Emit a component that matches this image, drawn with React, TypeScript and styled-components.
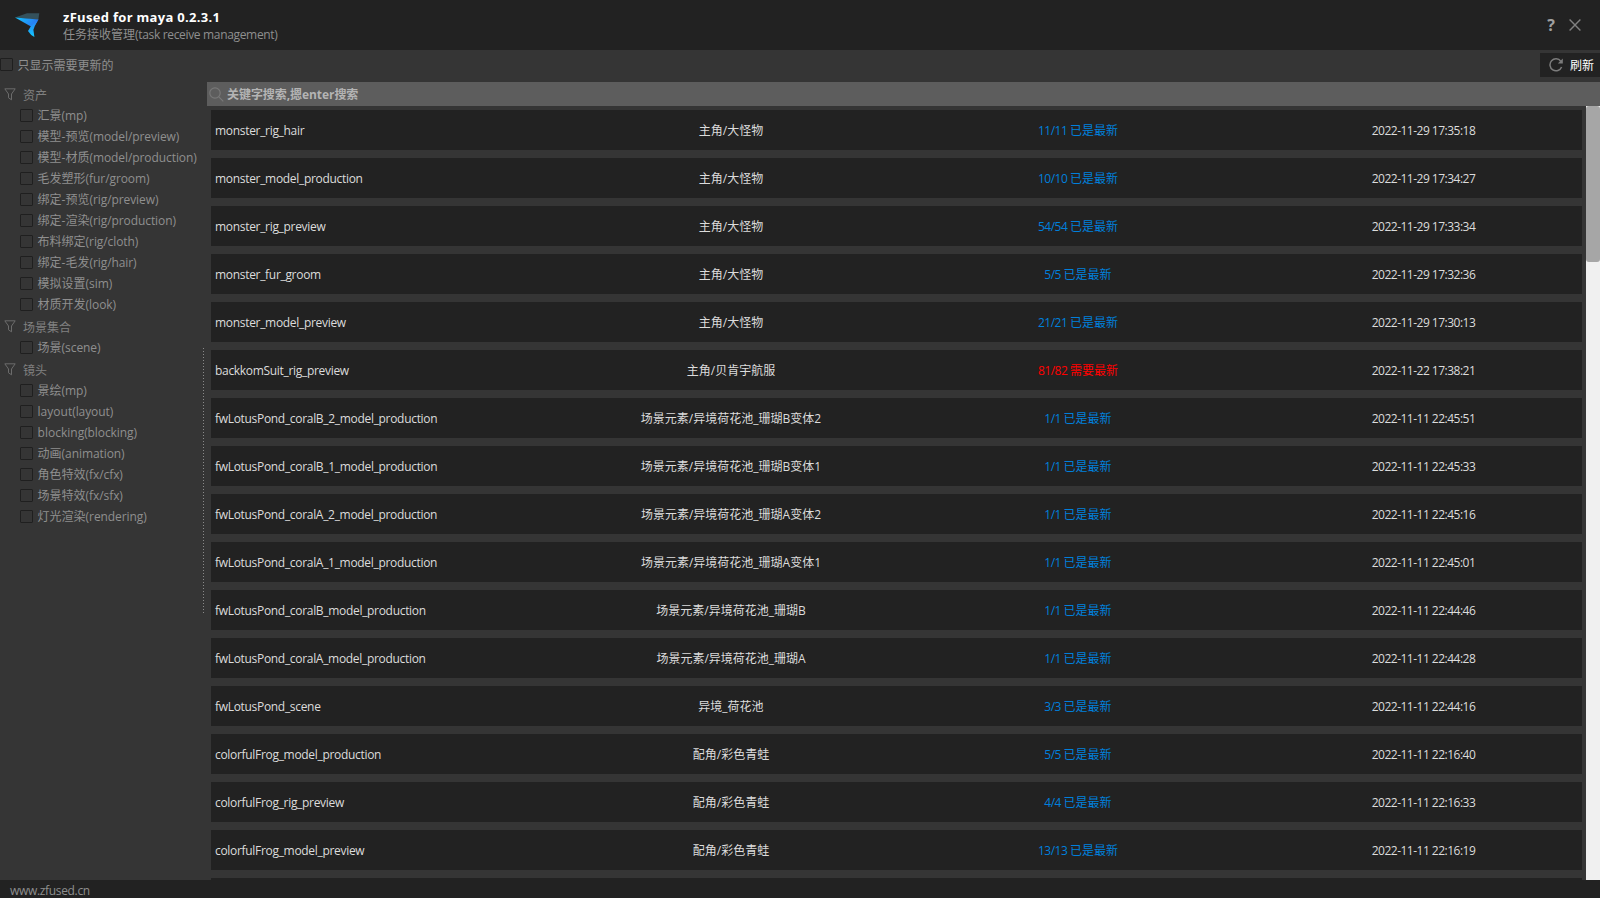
import React from 'react';
import styled, { createGlobalStyle } from 'styled-components';

const Global = createGlobalStyle`
  * { box-sizing: border-box; }
  body { margin: 0; background: #353535; overflow: hidden; }
`;

const Window = styled.div`
  width: 1600px;
  height: 898px;
  display: flex;
  flex-direction: column;
  overflow: hidden;
  background: #353535;
  color: #8f8f8f;
  font: 12px/18px 'Open Sans', 'Noto Sans CJK SC', sans-serif;
  white-space: nowrap;
`;

const Header = styled.header`
  height: 50px;
  flex: none;
  display: flex;
  align-items: center;
  background: #222222;
  padding: 0 13px 0 15px;
`;

const LogoIcon = styled.svg`
  width: 25px;
  height: 26px;
  flex: none;
`;

const Titles = styled.div`
  flex: 1;
  margin-left: 23px;
  padding-top: 1px;
`;

const Title = styled.h1`
  margin: 0;
  font-size: 13px;
  line-height: 17px;
  font-weight: 700;
  letter-spacing: 0.31px;
  color: #ffffff;
`;

const Subtitle = styled.div`
  font-size: 12px;
  line-height: 17px;
`;

const WindowButton = styled.button`
  width: 24px;
  height: 24px;
  padding: 0;
  border: 0;
  background: none;
  display: flex;
  align-items: center;
  justify-content: center;
  color: #a0a0a0;
  font: 700 16px/24px 'Open Sans', sans-serif;
`;

const Toolbar = styled.div`
  height: 32px;
  flex: none;
  display: flex;
  align-items: flex-start;
  justify-content: space-between;
  padding-top: 3px;
`;

const CheckLabel = styled.label<{ $indent?: number }>`
  height: 21px;
  display: flex;
  align-items: center;
  gap: 4.6px;
  padding-left: ${(p) => p.$indent ?? 0}px;
`;

const ToolbarLabel = styled(CheckLabel)`
  height: 23px;
`;

const Box = styled.span`
  width: 13px;
  height: 13px;
  flex: none;
  border: 1px solid #1f1f1f;
  border-radius: 1px;
`;

const Tracked = styled.span<{ $spacing: number }>`
  letter-spacing: ${(p) => p.$spacing}px;
`;

const LabelText = styled.span<{ $drop?: number }>`
  padding-top: ${(p) => p.$drop ?? 1}px;
`;

const RefreshButton = styled.button`
  width: 60px;
  height: 24px;
  padding: 0 0 0 9px;
  border: 0;
  background: #222222;
  color: #ffffff;
  display: flex;
  align-items: center;
  gap: 7px;
  font: 12px/18px 'Open Sans', 'Noto Sans CJK SC', sans-serif;
`;

const RefreshText = styled.span`
  padding-top: 2px;
`;

const Body = styled.main`
  flex: 1;
  min-height: 0;
  display: flex;
`;

const Sidebar = styled.aside`
  width: 203px;
  flex: none;
  padding-top: 1px;
`;

const GroupTitle = styled.div`
  height: 22px;
  display: flex;
  align-items: center;
  gap: 7px;
  padding-left: 4px;
  color: #808080;
`;

const GroupName = styled.span`
  padding-top: 3px;
`;

const Splitter = styled.div`
  width: 4px;
  flex: none;
  display: flex;
  align-items: center;
  padding-bottom: 2px;
`;

const Dots = styled.div`
  width: 1px;
  height: 265px;
  background: repeating-linear-gradient(#8a8a8a 0 1px, transparent 1px 3px);
`;

const Content = styled.section`
  flex: 1;
  display: flex;
  flex-direction: column;
`;

const Search = styled.div`
  height: 24px;
  flex: none;
  display: flex;
  align-items: center;
  gap: 3px;
  padding-left: 2px;
  background: #5d5d5d;
  color: #b4b4b4;
  font-weight: 700;
`;

const SearchHint = styled.span`
  padding-top: 2px;
  letter-spacing: -0.06px;
`;

const ListArea = styled.div`
  flex: 1;
  min-height: 0;
  display: flex;
`;

const List = styled.div`
  flex: 1;
  display: flex;
  flex-direction: column;
  gap: 8px;
  padding: 4px 4px 0;
  overflow: hidden;
`;

const Row = styled.div`
  height: 40px;
  flex: none;
  display: grid;
  grid-template-columns: 347px 346px 348px 330px;
  align-items: center;
  padding-top: 2px;
  background: #222222;
  color: #dcdcdc;
`;

const Name = styled.span`
  padding-left: 4px;
  letter-spacing: -0.31px;
`;

const Cell = styled.span`
  text-align: center;
`;

const Status = styled(Cell)<{ $current: boolean }>`
  color: ${(p) => (p.$current ? '#0080dc' : '#ff0000')};
`;

const Time = styled(Cell)`
  padding-left: 13px;
  letter-spacing: -0.51px;
`;

const ScrollTrack = styled.div`
  width: 14px;
  background: #f0f0f0;
`;

const ScrollHandle = styled.div`
  height: 156px;
  border-radius: 3px;
  background: #a6a6a6;
`;

const Footer = styled.footer`
  height: 18px;
  flex: none;
  background: #222222;
  padding: 2px 0 0 10px;
  letter-spacing: -0.33px;
`;

const Logo = () => (
  <LogoIcon viewBox="0 0 25 26">
    <defs>
      <linearGradient id="wing" x1="0" y1="0" x2="1" y2="0.3">
        <stop offset="0" stopColor="#12c8ff" />
        <stop offset="1" stopColor="#2a78f4" />
      </linearGradient>
      <linearGradient id="tail" x1="0" y1="0" x2="0" y2="1">
        <stop offset="0" stopColor="#2a7cf4" />
        <stop offset="1" stopColor="#12c8ff" />
      </linearGradient>
    </defs>
    <path d="M0 5.5 12 1.2H24.3L23.3 8Z" fill="#34515c" />
    <path d="M0 5.5 23.4 7.5 19.6 13.6 16 14.6Z" fill="url(#wing)" />
    <path d="M23.4 7.5 19.8 14 18.4 17.8 19.4 25 16.2 23 13 19 16 14Z" fill="url(#tail)" />
  </LogoIcon>
);

const Funnel = () => (
  <svg width="12" height="13" viewBox="0 0 12 13" fill="none" stroke="#6c6c6c">
    <path d="M.8 .8H11.2L7.5 6V11.8L4.5 9.8V6Z" />
  </svg>
);

const groups: { title: string; items: string[] }[] = [
  {
    title: '资产',
    items: ['汇景(mp)', '模型-预览(model/preview)', '模型-材质(model/production)', '毛发塑形(fur/groom)', '绑定-预览(rig/preview)', '绑定-渲染(rig/production)', '布料绑定(rig/cloth)', '绑定-毛发(rig/hair)', '模拟设置(sim)', '材质开发(look)'],
  },
  { title: '场景集合', items: ['场景(scene)'] },
  {
    title: '镜头',
    items: ['景绘(mp)', 'layout(layout)', 'blocking(blocking)', '动画(animation)', '角色特效(fx/cfx)', '场景特效(fx/sfx)', '灯光渲染(rendering)'],
  },
];

type Task = [name: string, entity: string, versions: string, time: string];

const tasks: Task[] = [
  ['monster_rig_hair', '主角/大怪物', '11/11', '2022-11-29 17:35:18'],
  ['monster_model_production', '主角/大怪物', '10/10', '2022-11-29 17:34:27'],
  ['monster_rig_preview', '主角/大怪物', '54/54', '2022-11-29 17:33:34'],
  ['monster_fur_groom', '主角/大怪物', '5/5', '2022-11-29 17:32:36'],
  ['monster_model_preview', '主角/大怪物', '21/21', '2022-11-29 17:30:13'],
  ['backkomSuit_rig_preview', '主角/贝肯宇航服', '81/82', '2022-11-22 17:38:21'],
  ['fwLotusPond_coralB_2_model_production', '场景元素/异境荷花池_珊瑚B变体2', '1/1', '2022-11-11 22:45:51'],
  ['fwLotusPond_coralB_1_model_production', '场景元素/异境荷花池_珊瑚B变体1', '1/1', '2022-11-11 22:45:33'],
  ['fwLotusPond_coralA_2_model_production', '场景元素/异境荷花池_珊瑚A变体2', '1/1', '2022-11-11 22:45:16'],
  ['fwLotusPond_coralA_1_model_production', '场景元素/异境荷花池_珊瑚A变体1', '1/1', '2022-11-11 22:45:01'],
  ['fwLotusPond_coralB_model_production', '场景元素/异境荷花池_珊瑚B', '1/1', '2022-11-11 22:44:46'],
  ['fwLotusPond_coralA_model_production', '场景元素/异境荷花池_珊瑚A', '1/1', '2022-11-11 22:44:28'],
  ['fwLotusPond_scene', '异境_荷花池', '3/3', '2022-11-11 22:44:16'],
  ['colorfulFrog_model_production', '配角/彩色青蛙', '5/5', '2022-11-11 22:16:40'],
  ['colorfulFrog_rig_preview', '配角/彩色青蛙', '4/4', '2022-11-11 22:16:33'],
  ['colorfulFrog_model_preview', '配角/彩色青蛙', '13/13', '2022-11-11 22:16:19'],
];

const TaskRow = ({ task: [name, entity, versions, time] }: { task: Task }) => {
  const [have, latest] = versions.split('/');
  const current = have === latest;
  return (
    <Row>
      <Name>{name}</Name>
      <Cell>{entity}</Cell>
      <Status $current={current}>
        <Tracked $spacing={-0.5}>{versions} </Tracked>
        {current ? '已是最新' : '需要最新'}
      </Status>
      <Time>{time}</Time>
    </Row>
  );
};

const SidebarItem = ({ text }: { text: string }) => {
  const split = text.indexOf('(');
  return (
    <CheckLabel $indent={20}>
      <Box />
      <LabelText>
        {text.slice(0, split)}
        <Tracked $spacing={-0.08}>{text.slice(split)}</Tracked>
      </LabelText>
    </CheckLabel>
  );
};

export default function App() {
  return (
    <Window>
      <Global />
      <Header>
        <Logo />
        <Titles>
          <Title>zFused for maya 0.2.3.1</Title>
          <Subtitle>任务接收管理<Tracked $spacing={-0.33}>(task receive management)</Tracked></Subtitle>
        </Titles>
        <WindowButton>?</WindowButton>
        <WindowButton>
          <svg width="12" height="12" viewBox="0 0 12 12" stroke="#808080" strokeWidth="1.4">
            <path d="M.6 .6 11.4 11.4M11.4 .6 .6 11.4" />
          </svg>
        </WindowButton>
      </Header>
      <Toolbar>
        <ToolbarLabel><Box /><LabelText $drop={2}>只显示需要更新的</LabelText></ToolbarLabel>
        <RefreshButton>
          <svg width="14" height="14" viewBox="0 0 14 14" fill="none" stroke="#7c7c7c" strokeWidth="1.5">
            <path d="M12.6 9A6 6 0 1 1 11.8 3.2" />
            <path d="M13.8 .6V5.6H8.8Z" fill="#7c7c7c" stroke="none" />
          </svg>
          <RefreshText>刷新</RefreshText>
        </RefreshButton>
      </Toolbar>
      <Body>
        <Sidebar>
          {groups.map((g) => (
            <div key={g.title}>
              <GroupTitle><Funnel /><GroupName>{g.title}</GroupName></GroupTitle>
              {g.items.map((item) => <SidebarItem key={item} text={item} />)}
            </div>
          ))}
        </Sidebar>
        <Splitter><Dots /></Splitter>
        <Content>
          <Search>
            <svg width="15" height="15" viewBox="0 0 15 15" fill="none" stroke="#787878" strokeWidth="1.2">
              <circle cx="6" cy="6" r="5.2" />
              <path d="M9.8 9.8 14.3 14.3" />
            </svg>
            <SearchHint>关键字搜索,摁enter搜索</SearchHint>
          </Search>
          <ListArea>
            <List>
              {tasks.map((t) => <TaskRow key={t[0]} task={t} />)}
              <Row />
            </List>
            <ScrollTrack><ScrollHandle /></ScrollTrack>
          </ListArea>
        </Content>
      </Body>
      <Footer>www.zfused.cn</Footer>
    </Window>
  );
}
